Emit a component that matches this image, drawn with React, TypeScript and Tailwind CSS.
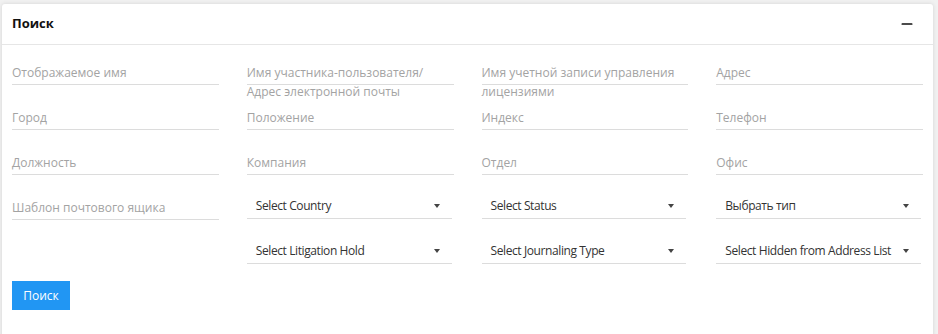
import { Minus } from 'lucide-react';

type Cell =
  | { kind: 'input'; label: string }
  | { kind: 'select'; label: string }
  | { kind: 'empty' };

const cells: Cell[] = [
  { kind: 'input', label: 'Отображаемое имя' },
  { kind: 'input', label: 'Имя участника-пользователя/ Адрес электронной почты' },
  { kind: 'input', label: 'Имя учетной записи управления лицензиями' },
  { kind: 'input', label: 'Адрес' },
  { kind: 'input', label: 'Город' },
  { kind: 'input', label: 'Положение' },
  { kind: 'input', label: 'Индекс' },
  { kind: 'input', label: 'Телефон' },
  { kind: 'input', label: 'Должность' },
  { kind: 'input', label: 'Компания' },
  { kind: 'input', label: 'Отдел' },
  { kind: 'input', label: 'Офис' },
  { kind: 'input', label: 'Шаблон почтового ящика' },
  { kind: 'select', label: 'Select Country' },
  { kind: 'select', label: 'Select Status' },
  { kind: 'select', label: 'Выбрать тип' },
  { kind: 'empty' },
  { kind: 'select', label: 'Select Litigation Hold' },
  { kind: 'select', label: 'Select Journaling Type' },
  { kind: 'select', label: 'Select Hidden from Address List' }
];

const InputField = ({ label }: { label: string }) => (
  <div className="h-[30px] border-b border-[#dcdcdc] pt-[8px] text-[12px] leading-[19px] text-[#a3a3a3]">
    {label}
  </div>
);

const SelectField = ({ label }: { label: string }) => (
  <div className="mr-[2px] flex h-[29px] items-start justify-between border-b border-[#dcdcdc] pl-[9px] pr-[12px] pt-[6px] text-[12px] leading-[19px] tracking-[-0.4px] text-[#333]">
    <span className="whitespace-nowrap">{label}</span>
    <span className="mt-[8px] h-0 w-0 shrink-0 border-x-[3.5px] border-t-[4px] border-x-transparent border-t-[#444]" />
  </div>
);

export default function App() {
  return (
    <div className="min-h-screen bg-[#f1f1f1] pl-[2px] pr-[5px] pt-[4px] font-['Open_Sans',sans-serif]">
      <div className="rounded-t-[3px] bg-white pb-[40px] shadow-[0_0_4px_rgba(0,0,0,0.12)]">
        <div className="flex h-[41px] items-center justify-between border-b border-[#e6e6e6] pl-[10px] pr-[18px]">
          <h2 className="text-[13px] font-bold text-[#111]">Поиск</h2>
          <Minus className="h-[16px] w-[16px] text-[#111]" strokeWidth={2.6} />
        </div>
        <div className="px-[10px] pt-[10px]">
          <div className="grid grid-cols-4 gap-x-[28px] gap-y-[15px]">
            {cells.map((c, i) =>
              c.kind === 'input' ? (
                <InputField key={i} label={c.label} />
              ) : c.kind === 'select' ? (
                <SelectField key={i} label={c.label} />
              ) : (
                <div key={i} />
              )
            )}
          </div>
          <button
            type="button"
            className="mt-[17px] h-[29px] w-[58px] bg-[#2196f3] text-[12px] text-white"
          >
            Поиск
          </button>
        </div>
      </div>
    </div>
  );
}
